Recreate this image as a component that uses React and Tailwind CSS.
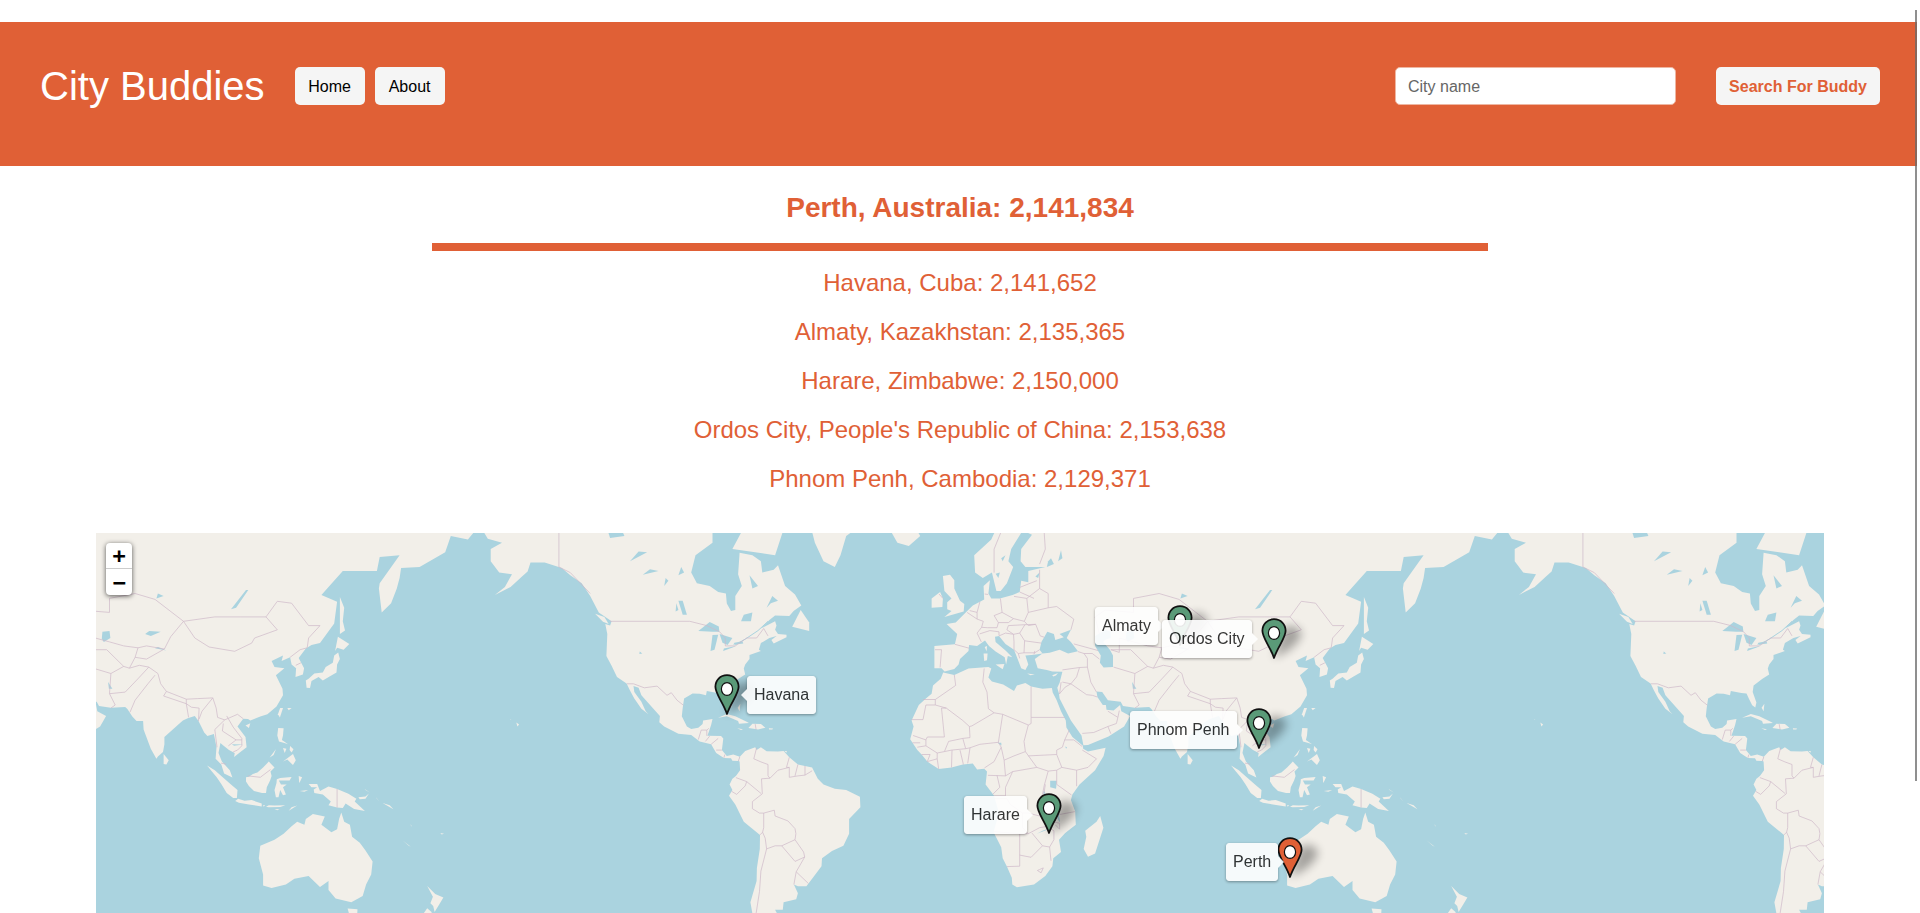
const W = 1024;
const R = W / (2 * Math.PI);
const EQUATOR = 248.6;
const CX = 864;

// lon,lat -> map pixels (web mercator, zoom 2)
const px = (lon, lat) => {
  const y = Math.log(Math.tan(Math.PI / 4 + (lat * Math.PI) / 360));
  return `${(CX + (lon * W) / 360).toFixed(1)} ${(EQUATOR - y * R).toFixed(1)}`;
};

const toPath = (s, close) => {
  const pts = s.trim().split(/\s+/).map((p) => p.split(",").map(Number));
  return "M" + pts.map((p) => px(p[0], p[1])).join("L") + (close ? "Z" : "");
};

const LAND = [
  // North America
  "-168,66 -162,67 -156,71 -140,70 -128,70 -115,68 -108,68 -95,68 -90,68 -87,66 -87,64 -93,62 -94.5,59 -92.5,57 -88,56.5 -85,55.3 -82.3,55 -82,52.9 -80.5,51.3 -79,51.5 -79,54.5 -76.7,56.5 -78,58.7 -77.5,62.4 -73,62 -70,61 -69.5,59 -65.5,59.5 -64,60.3 -61.5,56.5 -58,54.8 -55.8,52.5 -58.5,51.3 -60,50.2 -65,50.3 -67,49.3 -70,47.3 -65,49 -64.5,48 -65,47 -64,46 -61,45.8 -61,45.2 -65.5,43.6 -66.3,44.5 -64.5,45.5 -67,45 -70,43.7 -70.7,42 -70,41.7 -74,40.6 -74,39.5 -75.5,38 -76,36.9 -75.5,35.2 -78,33.9 -81,32 -81.3,30 -80,26.8 -80.4,25.2 -81.5,25.9 -82.7,28 -83.5,29.6 -85.3,29.7 -89,30.3 -89.3,29 -91.5,29.5 -94,29.6 -97,28 -97.5,25 -97.8,22.4 -96,19 -94.5,18.2 -92,18.6 -90.5,19.8 -90.3,21 -87,21.5 -87.5,19.5 -88.2,17.5 -88.8,15.9 -84,15.8 -83.2,15 -83.7,11 -82,9 -79.7,9.5 -77.4,8.7 -77.9,7.2 -80,7.3 -80.5,8.2 -83,8.3 -85.7,10 -87.5,13 -91.5,14 -94.5,16.2 -99,16.6 -104,19 -105.7,20.4 -105.5,22.5 -108.5,25.5 -112,29 -113,31.3 -114.8,31.8 -114.5,30 -112,27 -110.5,24 -109.5,23 -112,24.8 -114.5,28 -116,30.5 -117.2,32.6 -120.6,34.5 -122.5,37.7 -124.3,40.3 -124,46 -124.7,48.4 -123,48 -122.5,49 -127,51 -130,54.5 -133,57 -137,58.5 -140,59.8 -146,60.8 -151,60.8 -152,59.2 -154,58.3 -158,56.3 -163.5,54.7 -160,56.3 -157.5,58.7 -162,59 -165,61 -165,63 -161,64 -166,64.6",
  // South America
  "-77.4,8.7 -75.5,10.7 -72,12 -71.5,11 -70,12 -68,10.6 -64,10.5 -62,10.7 -60,8.5 -57,6 -52,5 -50,1 -48,-1 -44,-2.5 -40,-3 -35.2,-5.3 -35,-9 -39,-13 -39,-18 -41,-22 -45,-23.7 -48.5,-26 -48.7,-28.5 -52,-32.3 -54,-34.5 -57,-34.5 -58.4,-34 -57,-36.5 -57.6,-38.2 -62,-39 -62.3,-41 -65,-41 -64,-42.5 -65.5,-45 -67,-46 -66,-48 -69,-51 -68.5,-53 -72,-53 -75,-50 -75,-46 -73,-42 -73.7,-39 -71.5,-33 -71.4,-29 -70.4,-23 -70.3,-18.4 -76,-14 -79,-8 -81.2,-5 -80,-3 -81,-1 -80,1 -78.8,2 -77.3,4 -77.5,7 -77.9,7.2",
  // Africa
  "-5.9,35.8 -2,35.1 3,36.9 10,37.3 11,36.9 10,34.3 11.2,33.2 15.2,32.3 19,30.3 20,32 23,32.7 25,31.7 29,31 32.3,31.2 32.6,29.9 34,27.5 35.5,24 37.2,21 37.4,18.7 39.5,15.5 43.2,12.5 43.3,11.5 45,10.5 51.2,11.8 50.5,9 47.5,4 42,-1 39.5,-4.5 39,-6.5 40.5,-10.5 40.7,-15 37,-17.8 34.8,-20 35.5,-24 32.8,-26 32.5,-28.5 30,-31.5 26,-34 20,-34.8 18.4,-34 18.2,-32 16.5,-28.6 15,-26 14.5,-22.5 11.8,-17.5 13.7,-11 13,-8.5 12,-5 9,-1 9.5,3.5 8.5,4.5 6,4.3 4.5,6.3 1,6 -3,5 -7.5,4.4 -11.5,7 -13.5,9.5 -15,11 -17.5,14.7 -16.3,19 -17,21 -14.5,26 -12,28 -10,29.5 -9.5,32 -6.8,34",
  // Eurasia
  "-9,38.7 -9,43 -1.8,43.4 -1,46 -4.7,48.4 -1.5,48.7 2,51 4.5,52.5 8.5,53.8 8.3,56.5 10.5,57.6 10,55 11,54 14,54 18.5,54.7 21,55.3 21.5,57.5 24,57.2 24,59.3 30,60 23,60 21.3,61 21.5,63 25.3,65.2 22,65.8 18,63 17,61 18.7,60 16.5,57 14.3,55.5 12.8,55.5 11.2,59 8,58 5.3,59 5,62 11,64.5 15,68 25,71 31,70 41,67 40,64.7 35,64 34.8,65 38,66 44,66 44,68 54,68.5 68,69 72,72 80,73 105,77 113,74 130,71 160,70 180,69 190,66 187,64.5 181,65 179,62.5 170,60 163.5,59.8 163,58 162,56 160,53 156.7,51 155.7,56 156,57 163,62 156,61.7 155,59.3 143,59.3 135.5,54.7 141,53.3 140,48.5 135,43.7 132,43.2 130,42.3 127.5,39.8 129.4,37 129,35.2 126.4,34.5 126.6,37 125,38 124.5,40 121.5,39 122,40.5 118,39 119,37.3 122.5,37 119.5,35 121.8,31 122,29 119.7,25.5 116.5,23 114,22.3 110.5,21 109.7,21.5 108,21.6 106,19 108.8,15.5 109.2,12 107,10.4 104.8,8.6 105,10 103,11 100.9,12.7 100,13.4 99.3,10 100.5,7 103.3,4 104.2,1.4 101.3,2.8 100.3,6 98.3,8 98.6,12 97.7,16.5 95.4,15.8 94.3,17 92.3,20.8 91,22.5 88.5,21.7 86.8,21 85,19.5 80.3,15.5 80.3,13 79.8,10.3 78,8.8 77.5,8 75.5,11.5 73,18 72.8,20.8 70.5,20.8 69,22.3 67.3,24.7 66.5,25.4 61.5,25.1 57.3,25.7 56.5,27 52,27.5 50,30 48,30.2 48.3,28.5 50.2,26 51.3,26 51.5,24.5 54,24.2 56.3,26 56.7,24 59.8,22.5 57.7,19 52.2,15.7 45,12.8 43.4,12.7 42.7,16 39,21 35,28 34.8,29.5 34.2,31.3 35,32.8 36,36 32.5,36.1 30.5,36.5 27.3,37 26.3,39.5 29,41 31.5,41.2 35,42 38,41 41.5,41.6 39,44 37.5,45 39,47 35,46 36.5,45.2 33.5,44.5 33,46 30.7,46.5 28.6,44 28,42 29,41 26,40.7 23,40.5 24,38 23,36.5 21.5,37 19.5,41 19,42 16,43.5 13.7,45.5 12.3,45.3 12.5,44 16,41.8 18.4,40 16.8,40.3 16.2,38 15.7,40 12.5,41.5 10.2,43 8.8,44.4 6,43 3.2,43.2 3,41.7 0,39.5 -0.5,38 -2,36.8 -5.4,36.1 -6.5,37 -9,37",
  // Australia
  "114,-22 113.5,-26 115,-31 115,-34.3 118,-35 123,-34 126,-32.3 131,-31.5 135,-34.7 138,-33 138,-35.6 140.5,-38 146,-39 150,-37.3 151.2,-34 153,-31 153.5,-27 151,-23.5 149,-21 146.3,-19 145.5,-15 143.5,-14 142.5,-10.8 141.7,-13 141,-16.5 139,-17.5 135.5,-15 136.7,-12.2 132.5,-11.3 130,-13 129.5,-15 127,-14 125,-15.5 122.2,-18 119,-20",
  // Greenland
  "-44,60 -42,62 -40,65 -30,68 -22,72 -25,80 -60,80 -68,76 -55,70 -51,64 -48,61",
  // Iceland
  "-24,65.5 -22,64 -18,63.5 -14,65 -16,66.5 -22,66.3",
  // Britain, Ireland
  "-5.5,50 1.3,51.2 1.5,52.8 0,53.5 -2,56 -2,57.6 -3.5,58.6 -6,58.4 -5.5,55.5 -3,54 -4.5,53.2 -4.5,51.7 -3,51.3",
  "-10,52 -6.2,52.2 -6,54 -7,55.3 -10,54",
  // Newfoundland, Baffin, Vancouver Is, Sakhalin
  "-59,47.7 -53,46.7 -53,48.7 -56,51.5",
  "-80,63 -72,62.5 -65,62 -62,66 -70,72 -85,73 -75,67",
  "-128.3,50.7 -125,50 -123.5,48.4 -125.5,48.9",
  "142,54.3 143.5,52 143,49 143.8,46.8 142,46 142,50",
  // Caribbean
  "-85,21.9 -82,23.1 -79,22.4 -75,20.6 -74.2,20.2 -77.7,19.9 -78,20.8 -82,22.4",
  "-74.4,18.5 -73,19.9 -70,19.8 -68.4,18.6 -71,18 -72,18.2",
  "-78.3,18.4 -76.3,18.1 -77,17.8",
  "-67.2,18.4 -65.7,18.3 -66,18 -67.1,18",
  "-78.2,25.1 -77.5,24 -77.2,26.4",
  "-61.7,10.7 -60.9,10.7 -61,10.1",
  // Madagascar
  "49.3,-12 50.4,-16 47.5,-24.5 45,-25.5 43.5,-23 44.4,-19 44,-17 48,-14",
  // Mediterranean islands
  "12.5,38 15.6,38.2 15,36.7",
  "8.3,41 9.7,41 9.5,39.2 8.5,39",
  "8.7,42.7 9.5,43 9.4,41.5",
  "23.6,35.5 26.3,35.2 24.8,35",
  "32.4,35 34.5,35.6 33.7,34.9 32.8,34.6",
  // Sri Lanka, Taiwan, Hainan
  "80,9.7 81.8,7.5 81,6 80,6.2",
  "121,25 122,25 120.9,22 120.2,23",
  "108.8,19.3 110.5,20.1 110,18.5",
  // Japan
  "130,33.5 131,34 133,35.5 136,35.8 137,37.3 139.5,38.5 140,40.5 141.4,41.3 142,39.5 141,38 140.8,35.8 138.5,34.7 136,33.5 134.5,34.5 132,33.3 131.5,31.2 130.3,31.3",
  "140.3,41.7 141.3,45.3 145.3,43.5 143.3,42 141,42.5",
  "123.5,25 125,25 124,24.3",
  // Philippines
  "120.3,18.5 122.2,18.4 122,16 121.6,14.5 123.8,13 122.5,13.4 120.6,14 120,16",
  "122,11.7 123.2,11.5 122.6,10",
  "124.5,12.4 125.7,11.3 125,10.2 124.3,11",
  "122,7 125.5,9.7 126.5,7.5 125.5,5.8 123.5,7.7",
  "117.3,8.4 119.5,11.3 118.7,9.3",
  // Indonesia etc
  "95.3,5.6 98,4 100.3,2 103.7,-1 106,-3 105.8,-5.8 104.5,-5.8 102.2,-4 100.4,-1 98.7,1.5 97,3.5",
  "105.2,-6.8 106.2,-6 108.5,-6.7 111,-6.5 114.5,-7.7 114.5,-8.7 110,-8 106.5,-7.4",
  "115,-8.2 115.7,-8.3 115.2,-8.8",
  "116,-8.8 117,-8.3 119,-8.4 122.8,-8.3 121,-8.9 117,-9",
  "120,-10 120.8,-9.7 119,-9.6",
  "124,-10.2 127,-8.4 125,-9",
  "109,1.5 110,1.7 111.4,2.7 113,3.2 115,5 117,7 119,5 117.6,3.5 118,2 117.5,0.5 116.3,-2 116,-4 114.6,-4 111.8,-3.3 110,-1.5 109,0",
  "119.8,0.8 121,1.3 125,1.6 124.3,0.4 120.5,0.4 121.3,-1 123.3,-1 122,-2 123,-4.5 122,-4.8 121,-3 120.4,-5.5 119.5,-5.5 119,-3 119.7,-0.5",
  "127.5,2 128.7,1.5 128,0 127.7,-0.5",
  "127.9,-3.3 130.8,-3 129.5,-3.6",
  "131,-0.8 134,-0.8 135,-3.3 138,-1.7 141,-2.6 145,-4.3 147.8,-6 147.2,-7 150.8,-10.3 147,-9.6 144,-7.7 143,-9.2 141,-9.1 138,-8.3 138.8,-7 136,-4.5 133,-4 132.8,-2.8 134,-2 132,-2",
  "148.5,-5.5 151,-5.2 152.2,-4.2 151,-6 149,-6.2",
  "151,-3 152.5,-3.8 150.7,-2.6",
  "155,-6 155.9,-7 154.7,-5.5",
  "157,-7.5 160.8,-9.7 159.5,-8.3",
  "166.8,-15 167.3,-15.8 167,-15",
  "164,-20.2 167,-22.4 166,-21.8",
  "177.3,-17.8 178.6,-18 177.8,-18.3",
  "-156,20.3 -155,19.7 -155.6,19",
  "-158.2,21.5 -157.7,21.4 -158,21.3",
  // Tasmania, NZ
  "144.7,-40.7 148.2,-40.9 148,-43 146,-43.6 145.2,-42",
  "172.7,-34.4 175.5,-36.7 178.4,-37.7 177,-39.5 175.3,-41.6 174.8,-40 173.8,-39.3 174.7,-37.5",
  "172.7,-40.6 174.3,-41.7 172.7,-43.6 170.7,-46 168,-46.5 166.5,-45.8 170.5,-43",
];

const WATER = [
  // Great Lakes and Canada
  "-92,46.7 -88,48.8 -84.8,47.8 -84.6,46.5 -87,46.5",
  "-87.7,41.7 -86.3,42 -85,45.8 -87,45.7",
  "-84.5,46 -80,45 -81.7,43.2 -83.5,43.8",
  "-83.3,41.7 -79,42.8 -79.2,42.9 -83,42.3",
  "-79.7,43.3 -76.2,43.6 -76.5,44.2 -79.3,43.8",
  "-97.5,50.5 -96,50.5 -97.5,53.5 -99,53.5",
  "-100,51.2 -99,51.5 -99.7,53",
  "-116,61 -110,62.5 -113,62.6",
  "-111.5,58.6 -106,59.3 -109,59.6",
  "-104,56.5 -102.5,57.5 -103.5,58",
  "-123,64.7 -118,65 -120,67 -124,66",
  "-99,58.5 -97,59 -98,60",
  "-77,49 -73.5,49 -73,51 -76,50.5",
  "-68,52 -66.5,53 -64,53.5 -66,54.5",
  "-73,56 -71,56.5 -74,58.5",
  "-111.7,41 -112.6,41.5 -112.7,40.9",
  // Caspian, Aral, Balkhash, Baikal
  "47.5,45.5 51,47 53,46.5 53,45 51,44.5 50.3,44 52.7,42 53.8,40.5 53.8,37.3 50.5,37.2 49.2,38.5 49.5,40.5 47.5,43",
  "58.5,46.5 61,46.7 61.3,45 59,44 58.3,44.8",
  "73.5,46 75,46.7 79,46.5 75.5,45.5",
  "103.7,51.7 105.5,52 109.8,55.7 109,55.7 105,52.7",
  "60.5,33 62,31 60.8,31",
  "81,41.8 78,42.7 77,42.4",
  // Africa
  "31.7,0.3 34,0.3 33.8,-2.5 31.7,-2",
  "29.2,-3.5 29.8,-3.5 31,-8.3 30.2,-7.5",
  "34,-9.5 34.8,-11.5 35.2,-14.2 34.3,-13",
  "13.2,13.5 14.5,13.5 14.6,12.6",
  "37,12.2 37.6,12 37.3,11.5",
  "32.5,-16 33.5,-15.6 29,-17 27,-18",
  // Scandinavia and Russia lakes
  "12.5,58.8 14,59 13.5,58",
  "30.5,60 33,60.5 32,61.5 31,61",
  "34.5,61 36,61.5 35.5,62.8",
  "26.5,58.3 28,59 27.5,58",
  "14.5,61.5 16,62 15,61",
  "78,55 80,54.5 77.5,54",
  "108,12.9 104,13 104.8,12.5",
];

const BORDERS = [
  "-123,49 -95,49 -89,48 -84.5,46.5 -82.5,45 -82.5,43 -79,43 -75,45 -71.5,45 -69,47.3 -67.5,45.5",
  "-141,72 -141,60 -137,59 -130,55",
  "-117.1,32.5 -114.8,32.5 -111,31.3 -106.5,31.8 -103,29 -101.5,29.8 -99.5,27.5 -97.2,25.9",
  "-92,14.6 -91,17.8 -89,17.8 -88.3,18.4",
  "-89,17.8 -89,15.9",
  "-89.5,14 -88,15.8",
  "-87.5,13 -85,15",
  "-85.7,11 -83.7,11",
  "-83,8.3 -82.7,9.5",
  "-77.4,8.7 -77.9,7.2",
  // South America
  "-71.5,11.8 -72.5,8 -70,6.9 -67.5,6 -67.5,2 -66.8,1.2",
  "-60,8.5 -61,5 -60,5 -60,1.5 -57,2 -54.5,2.3 -52,3.8",
  "-57,6 -58,2",
  "-54.5,5.5 -54.5,2.3",
  "-60,5 -64,4 -66.8,1.2 -69.8,1 -69.5,-4.3 -73,-7 -73,-9.5 -70.5,-11 -69,-11 -65.3,-10 -65,-12 -60.5,-13.7 -58,-16.3 -57.7,-18 -58,-20",
  "-69.9,-4.2 -75,0 -78.8,1.4",
  "-75,0 -75.5,-1.5 -78.5,-4.5 -80.3,-3.4",
  "-69,-11 -69,-16 -69.4,-17.5 -68.5,-19.5 -68,-23 -70,-30 -70.5,-36 -71.7,-42 -72,-50",
  "-70.3,-18.4 -69.4,-17.5",
  "-68,-23 -65,-22 -62.7,-22 -58,-20 -55,-24 -54.6,-25.6 -58,-27 -62.7,-22",
  "-54.6,-25.6 -57.6,-30.2 -53.3,-33.7",
  "-57.6,-30.2 -58.4,-34",
  // Africa
  "-2,35.1 -1.5,32 -8.7,27.7 -13,27.7",
  "-8.7,27.7 -8.7,26 -12,26 -13,21.3 -17,21.3",
  "-8.7,26 -4.8,25 -6.5,25 -5.5,15.5 -11.5,15.5 -12,14.5 -16.5,16",
  "-12,14.5 -12,12.5 -15,12",
  "-4.8,25 1,21 3.3,19 4.2,19.2 12,23.5 10,24.8 9.5,30 8,33 8.5,36.9",
  "25,31.7 25,22 25,20 24,19.5 15,23 12,23.5",
  "25,22 36.8,22",
  "24,19.5 22.5,14 23,10.5 19,9 15.5,7.5 14.5,12 13.5,13.7 15,23",
  "3.5,11.8 7,13 13.5,13.7",
  "14.5,12 12,7 8.6,4.8",
  "3.3,19 3.5,15.3 1,15 -4,14 -5.5,10.5 -3,11 2,11.5 3.5,11.8 2.7,6.4",
  "1,15 2,11.5",
  "1.2,6 0,11",
  "-3,5 -2.8,11",
  "-11.5,7 -8,8 -7.5,4.4",
  "-8,8 -8,10 -12,12.5",
  "-8,10 -5.5,10.5",
  "-13.5,9.5 -10.5,9.5 -11.5,7",
  "-16.7,13.5 -14,13.5",
  "15.5,7.5 16,2 9.8,2.2",
  "13,2.2 14,-2 11.5,-4.5",
  "18.5,3.5 16,-2 16,-5 12,-5",
  "16,2 18.5,3.5 27,5 23,10.5",
  "24,9 34,9.5 34,11 36,12 36.8,14.5 38.5,18",
  "27,5 31,3.7 34,4 35.8,5 34,9.5",
  "35.8,5 41,4 45,5 48,8 43,11",
  "36.8,14.5 40,14.5 43,12.2",
  "41,4 41,-1.6",
  "34,-1 39.2,-4.7",
  "34,4 34,-1",
  "31,3.7 29.6,-1.4 29,-4.5 28.5,-9 30.7,-8 34,-9.5 35,-11.5 40.4,-10.5",
  "30,-1 29.5,-4.5",
  "12.2,-6 16.5,-6 17.7,-8 22,-11 24,-11 28,-12 29.5,-13 28.5,-9",
  "11.8,-17.3 21,-18 24,-18 28,-16 30.4,-15.6 33,-17 33,-20 31.5,-22.4",
  "22,-11 22,-16 24,-18",
  "21,-18 21,-28.5 16.5,-28.6",
  "25.3,-17.8 29,-22 31.5,-22.4 32,-26.8",
  "21,-25 25,-25.7 29,-22",
  "29.5,-13 33,-14 30.4,-15.6",
  "33,-14 35,-14.5 35,-16.5 33.5,-15",
  "28,-29.5 29.3,-29 28.5,-30.5 27.2,-29.8 28,-29.5",
  // Europe
  "-1.8,43.4 3.2,42.4",
  "-8.8,42 -6.5,42 -7,37.2",
  "2.5,51 6,49.5 8.2,49 7.6,47.6 6,46.2 7.5,44",
  "3.4,51.4 6,51 7,53.3",
  "6,49.5 6,51",
  "14.2,54 14.8,51 12,50.3 13.5,48.7 13,47.5 9.6,47.5 7.6,47.6",
  "8.7,54.9 9.9,54.8",
  "6.9,46 10.5,46.8 13.7,46.5 13.7,45.6",
  "14.8,51 18.8,49.6 22.6,49 24,51 23.5,54 19,54.4",
  "13.5,48.7 17,48.7 18.8,49.6",
  "16.5,47 17,48 22.8,48.2 21,46.2 18.8,45.9 16.5,47",
  "22.8,48.2 26.6,48.3 28.2,45.5 29.6,45.2",
  "21,46.2 22.7,44.3 28.6,43.7",
  "22.7,44.3 22.5,41.2 26.3,41.2 28,42",
  "19,42 20.5,41 21,39.7",
  "20.5,41 22.5,41.2",
  "18.8,45.9 19,44 19,42",
  "13.7,45.5 16,46.2 18.8,45.9",
  "26.3,41.7 26,40.8",
  "40,49.5 34,52.3 31,52 24,51",
  "39,47 40,49.5",
  "26.6,48.3 24,48 22.6,49",
  "23.5,54 28,56 31,55 31,52",
  "28,56 28,59.5",
  "21,56.2 27,57.5",
  "21,55.3 26,54",
  "28,60.5 30,63 29,69",
  "12,59 12,63 18,69 28,70",
  "24,65.8 21,69",
  // Asia
  "47.5,50 51,51.5 61,51 61,54 70,55 77,53.8 87,49 98,50 107,50 116,50 120,53.4 125,53 131,48 135,48 131,45 130.5,42.5",
  "47.5,50 49,46",
  "116,50 120,47 112,45 111,43.7 105,41.6 96,42.7 91,45 87,49",
  "124.5,40 128,42 130.5,42.5",
  "126.5,37.8 128.3,38.5",
  "87,49 82.5,45.3 80.3,42.2 74,39.5 70,40 71,42.5 74,43 80.3,42.2",
  "53,42 56,41.3 56,45 61,44 66,43 71,42.5",
  "53,42 60,42 66,37.5 68,37 71.5,37.8 74.8,37.3",
  "68,37 70,40",
  "74.8,37.3 78,35.5 79,32.5 81,30.2 88,27.8 92,28 97.3,28.2 98.5,25 99,22 101.5,21.2 106,23 108,21.6",
  "81,30.2 80,28.8 88,26.4 88,27.8",
  "77,35 74.5,32.5 70,27.5 68.2,23.7",
  "88,26.4 88.8,22",
  "88,26.4 89.8,25.3 92.5,25 92.3,20.8",
  "92.5,21.5 93.5,24 97.3,28.2",
  "101.5,21.2 98,18 98.8,12",
  "101,20 100.7,17.5 105.5,14.5",
  "102.2,22.5 104.5,18.8 107.5,15 107.5,12.5 106,11 104.5,10.4",
  "102.8,12.5 105.5,14.5 107.5,14.5",
  "100.2,6.5 102,6.1",
  "74.8,37.3 71,34 66.5,30 61,29.5 63,26 61.5,25",
  "61,29.5 61.5,35.5 54,37.3",
  "61.5,35.5 66,37.5",
  "44.8,37.3 46,33 48,30",
  "36,36.5 42,37.2 44.8,37.3",
  "42,37.2 41,34.5 39,32.5 37,31.5 34.9,29.4",
  "39,32.5 44.5,29.2 46.5,29 48.3,28.5",
  "41.5,41.5 43.6,41 44.8,39.7 44.8,37.3",
  "40,43.5 48.5,41.8",
  "43.6,41 46.5,41 49,39.5",
  "43,16.7 47,17 52,19 53,16.6",
  "52,19 55,20 55.5,22 56,24.2",
  "52,24 55.5,22",
  "35,29.5 35.5,32.8 35.7,33",
  "39,32.5 36,33",
  "109.6,2 114,1.5 117.6,4.2",
  "141,-2.6 141,-9.1",
  "-72,19.8 -71.7,18",
  "-7.4,54.9 -6,54",
];

const RIVERS = [
  "-79,43.3 -75.5,44.7 -71,46.8 -67.5,49",
];

// x, y: pin tip; bx, by: tooltip box
const PINS = [
  { name: "Havana", x: 630.5, y: 181, bx: 651, by: 143, side: "left" },
  { name: "Almaty", x: 1083.5, y: 112, bx: 999, by: 74, side: "right" },
  { name: "Ordos City", x: 1177.5, y: 125, bx: 1066, by: 87, side: "right" },
  { name: "Phnom Penh", x: 1162.5, y: 215, bx: 1034, by: 178, side: "right" },
  { name: "Harare", x: 952.5, y: 300, bx: 868, by: 263, side: "right" },
  { name: "Perth", x: 1194, y: 344, bx: 1130, by: 310, side: "right", orange: true },
];

const WorldMap = () => (
  <svg width="1728" height="500" className="block">
    <defs>
      <g id="world">
        {LAND.map((s, i) => (
          <path key={i} d={toPath(s, true)} fill="#f2efe9" />
        ))}
        {WATER.map((s, i) => (
          <path key={i} d={toPath(s, true)} fill="#aad3df" />
        ))}
        {RIVERS.map((s, i) => (
          <path key={i} d={toPath(s)} fill="none" stroke="#aad3df" strokeWidth="1" />
        ))}
        {BORDERS.map((s, i) => (
          <path key={i} d={toPath(s)} fill="none" stroke="#cfb9c8" strokeWidth="0.7" />
        ))}
      </g>
      <filter id="blur" x="-50%" y="-50%" width="200%" height="200%">
        <feGaussianBlur stdDeviation="5" />
      </filter>
    </defs>
    <use href="#world" x="-1024" />
    <use href="#world" />
    <use href="#world" x="1024" />
    {/* marker shadows */}
    {PINS.map((p) => (
      <path
        key={p.name}
        d={`M${p.x} ${p.y}L${p.x + 10} ${p.y - 30}Q${p.x + 24} ${p.y - 36} ${p.x + 28} ${p.y - 24}Q${p.x + 24} ${p.y - 10} ${p.x} ${p.y}Z`}
        fill="#000"
        opacity="0.32"
        filter="url(#blur)"
      />
    ))}
  </svg>
);

const Pin = ({ x, y, orange }) => (
  <svg
    width="26"
    height="42"
    viewBox="0 0 26 42"
    className="absolute"
    style={{ left: x - 13, top: y - 40 }}
  >
    <path
      d="M13 1.2C6.2 1.2 1.4 6.2 1.4 12.8C1.4 20 9.2 28.5 13 40C16.8 28.5 24.6 20 24.6 12.8C24.6 6.2 19.8 1.2 13 1.2Z"
      fill={orange ? "#e06036" : "#5a9a78"}
      stroke="#111"
      strokeWidth="1.8"
      strokeLinejoin="round"
    />
    <ellipse cx="13" cy="15" rx="5.6" ry="6.4" fill="#fff" stroke="#111" strokeWidth="1.2" />
  </svg>
);

const Tooltip = ({ p }) => (
  <div
    className="absolute whitespace-nowrap rounded-[3px] border border-white bg-white p-[6px] text-[16px] leading-6 text-[#222] opacity-90 shadow-[0_1px_3px_rgba(0,0,0,0.4)]"
    style={{ left: p.bx, top: p.by }}
  >
    {p.name}
    {p.side === "left" ? (
      <span className="absolute left-[-13px] top-[12px] h-0 w-0 border-y-[6px] border-r-[6px] border-l-[6px] border-y-transparent border-l-transparent border-r-white" />
    ) : (
      <span className="absolute right-[-13px] top-[12px] h-0 w-0 border-y-[6px] border-l-[6px] border-r-[6px] border-y-transparent border-r-transparent border-l-white" />
    )}
  </div>
);

const CITIES = [
  "Havana, Cuba: 2,141,652",
  "Almaty, Kazakhstan: 2,135,365",
  "Harare, Zimbabwe: 2,150,000",
  "Ordos City, People's Republic of China: 2,153,638",
  "Phnom Penh, Cambodia: 2,129,371",
];

export default function App() {
  return (
    <div className="relative h-[913px] overflow-hidden bg-white font-['Liberation_Sans',Arial,sans-serif]">
      {/* page scrollbar thumb */}
      <div className="absolute right-[3px] top-[10px] z-10 h-[771px] w-[2px] bg-[#6a6a6a]/75" />

      <div className="h-[22px]" />

      {/* ── Header ── */}
      <header className="mr-[3px] flex h-[144px] items-start justify-between bg-[#e06036] pl-10 pr-[37px] pt-10">
        <div className="flex items-center gap-[30px]">
          <h1 className="text-[40px] leading-[48px] text-white">City Buddies</h1>
          <div className="flex gap-[10px]">
            <button className="h-[38px] w-[70px] rounded-[5px] bg-[#f5f5f5] pt-px text-[16px] text-black">Home</button>
            <button className="h-[38px] w-[70px] rounded-[5px] bg-[#f5f5f5] pt-px text-[16px] text-black">About</button>
          </div>
        </div>
        <div className="flex h-12 items-center gap-10">
          <input
            placeholder="City name"
            className="h-[38px] w-[281px] rounded-[5px] border border-[#eeb6a2] bg-white px-3 pt-px text-[16px] text-black outline-none placeholder:text-[#666]"
          />
          <button className="h-[38px] w-[164px] rounded-[5px] bg-[#f5f5f5] pt-px text-[16px] font-bold text-[#e06036]">
            Search For Buddy
          </button>
        </div>
      </header>

      {/* ── Results ── */}
      <div className="text-center text-[#e06036]">
        <h2 className="pt-6 text-[28px] font-bold leading-[36px]">Perth, Australia: 2,141,834</h2>
        <div className="mx-auto mt-[17px] h-2 w-[1056px] bg-[#e06036]" />
        <ul className="mt-[7px] text-[24px]">
          {CITIES.map((c) => (
            <li key={c} className="h-[49px] leading-[49px]">
              {c}
            </li>
          ))}
        </ul>
      </div>

      {/* ── Map ── */}
      <div className="relative mx-auto mt-[30px] h-[500px] w-[1728px] overflow-hidden bg-[#aad3df]">
        <WorldMap />
        {PINS.map((p) => (
          <Pin key={p.name} x={p.x} y={p.y} orange={p.orange} />
        ))}
        {PINS.map((p) => (
          <Tooltip key={p.name} p={p} />
        ))}
        <div className="absolute left-[10px] top-[10px] w-[26px] overflow-hidden rounded-[4px] bg-white shadow-[0_1px_5px_rgba(0,0,0,0.65)]">
          <div className="flex h-[26px] items-center justify-center border-b border-[#ccc] font-['DejaVu_Sans_Mono',monospace] text-[22px] font-bold text-black">
            +
          </div>
          <div className="flex h-[26px] items-center justify-center font-['DejaVu_Sans_Mono',monospace] text-[22px] font-bold text-black">
            −
          </div>
        </div>
      </div>
    </div>
  );
}
